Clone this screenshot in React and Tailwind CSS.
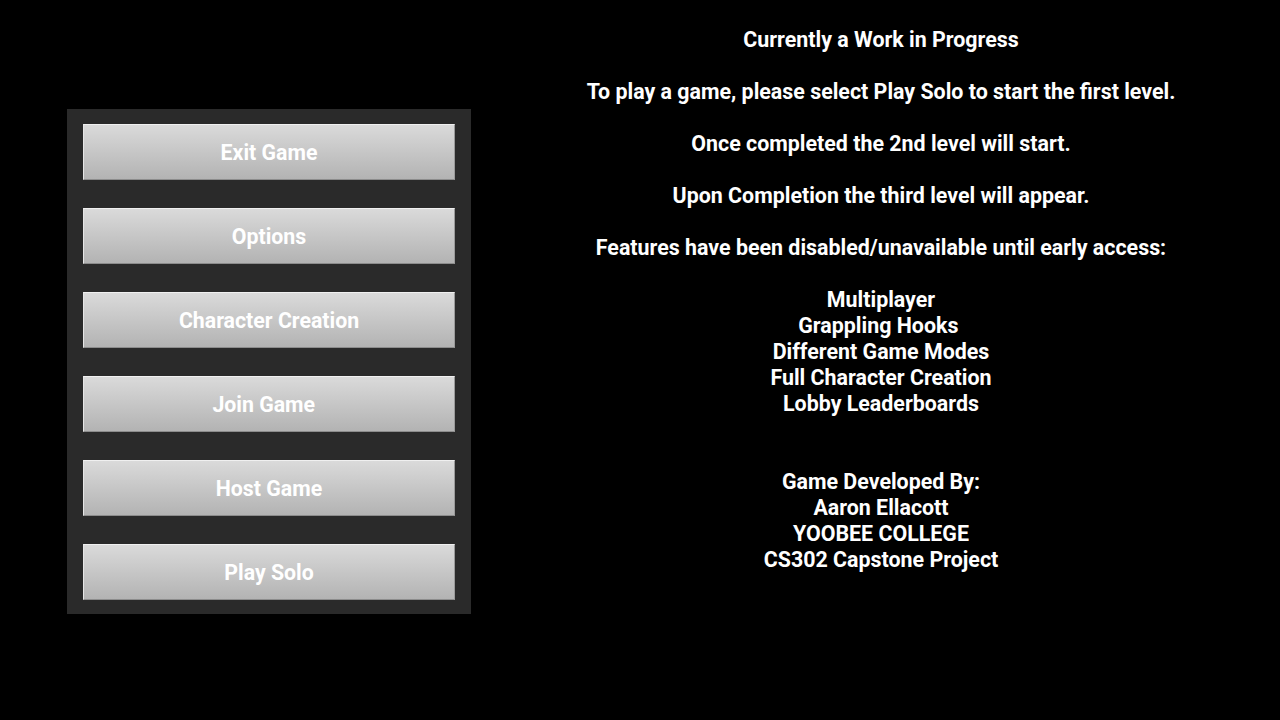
import React from 'react';

const buttons = ['Exit Game', 'Options', 'Character Creation', 'Join Game\u00a0\u00a0', 'Host Game', 'Play Solo'];

const lines = [
  'Currently a Work in Progress',
  '',
  'To play a game, please select Play Solo to start the first level.',
  '',
  'Once completed the 2nd level will start.',
  '',
  'Upon Completion the third level will appear.',
  '',
  'Features have been disabled/unavailable until early access:',
  '',
  'Multiplayer',
  'Grappling Hooks\u00a0',
  'Different Game Modes',
  'Full Character Creation',
  'Lobby Leaderboards',
  '',
  '',
  'Game Developed By:',
  'Aaron Ellacott',
  'YOOBEE COLLEGE',
  'CS302 Capstone Project',
];

const MenuButton = ({ label }) => (
  <div className="h-[56px] pt-[2px] flex items-center justify-center bg-gradient-to-b from-[#dadada] to-[#b3b3b3] border border-t-[#f0f0f0] border-l-[#e6e6e6] border-r-[#9a9a9a] border-b-[#8c8c8c] text-white text-[21.3px] font-bold whitespace-pre">
    {label}
  </div>
);

export default function App() {
  return (
    <div className="w-[1280px] h-[720px] bg-black flex overflow-hidden" style={{ fontFamily: 'Roboto, "Noto Sans", sans-serif' }}>
      {/* Left side - menu panel */}
      <div className="pl-[67px] pt-[109px]">
        <div className="w-[404px] bg-[#2a2a2a] px-[16px] pt-[15px] pb-[14px] flex flex-col gap-[28px]">
          {buttons.map((b) => (
            <MenuButton key={b} label={b} />
          ))}
        </div>
      </div>

      {/* Right side - info text */}
      <div className="flex-1 ml-[11px] pt-[27px] text-white text-[21.4px] font-bold leading-[26px] text-center">
        {lines.map((l, i) => (
          <div key={i} className="h-[26px] whitespace-pre">{l}</div>
        ))}
      </div>
    </div>
  );
}
